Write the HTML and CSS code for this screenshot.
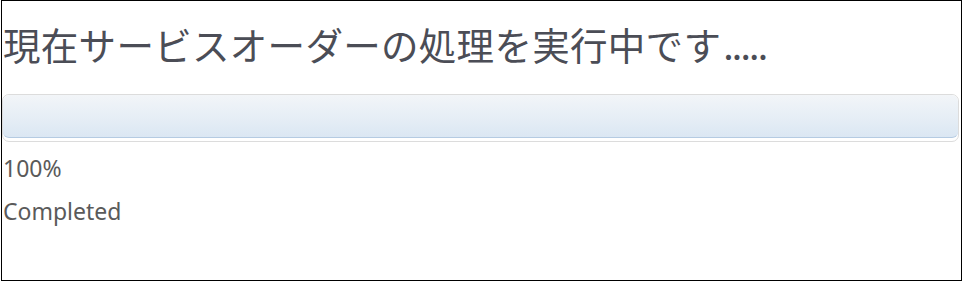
FILE: index.html
```html
<!DOCTYPE html>
<html lang="ja">
<head>
<meta charset="utf-8">
<title>処理中</title>
<link rel="stylesheet" href="styles.css">
</head>
<body>
<div class="frame">
  <h1 class="title">現在サービスオーダーの処理を実行中です<span class="dots">.....</span></h1>
  <div class="progress">
    <div class="progress-value"></div>
  </div>
  <div class="percent">100%</div>
  <div class="status">Completed</div>
</div>
</body>
</html>
```

FILE: styles.css
```css
html, body {
  margin: 0;
  padding: 0;
  background: #ffffff;
}

.frame {
  box-sizing: border-box;
  margin-left: 1px;
  width: 961px;
  height: 281px;
  border: 1px solid #000;
  padding: 16px 2px 0 0;
  display: flex;
  flex-direction: column;
}

.title {
  margin: 0 0 24px 1px;
  font-family: "Noto Sans CJK JP", "Noto Sans", sans-serif;
  font-weight: 400;
  font-size: 37.5px;
  letter-spacing: 0.3px;
  line-height: 53px;
  color: #4b4d56;
  white-space: nowrap;
}

.dots {
  letter-spacing: -1.8px;
  margin-left: 2px;
}

.progress {
  box-sizing: border-box;
  height: 48px;
  border: 1px solid #dcdcdc;
  border-radius: 7px;
  background: #ffffff;
  padding-bottom: 3px;
  overflow: hidden;
}

.progress-value {
  box-sizing: border-box;
  height: 100%;
  border-bottom: 1px solid #b5cbe2;
  border-radius: 6px;
  background: linear-gradient(to bottom, #f2f5f8 0%, #e8eff6 45%, #dbe7f3 100%);
}

.percent,
.status {
  font-family: "Noto Sans", "Open Sans", sans-serif;
  font-size: 23px;
  line-height: 30px;
  color: #5a5a5a;
  margin-left: 1px;
}

.percent {
  margin-top: 11px;
}

.status {
  margin-top: 13px;
}
```
